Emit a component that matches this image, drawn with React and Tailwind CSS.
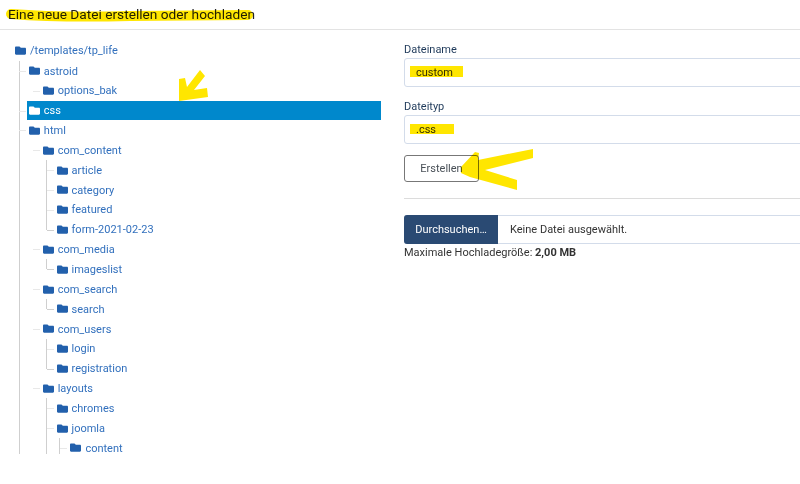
import React from 'react';
import { FaFolder } from 'react-icons/fa';

const tree = [
  { name: 'astroid', children: [{ name: 'options_bak' }] },
  { name: 'css', active: true },
  {
    name: 'html',
    children: [
      {
        name: 'com_content',
        lined: 'closed',
        children: [{ name: 'article' }, { name: 'category' }, { name: 'featured' }, { name: 'form-2021-02-23' }],
      },
      { name: 'com_media', lined: 'closed', children: [{ name: 'imageslist' }] },
      { name: 'com_search', lined: 'closed', children: [{ name: 'search' }] },
      { name: 'com_users', lined: 'closed', children: [{ name: 'login' }, { name: 'registration' }] },
      {
        name: 'layouts',
        lined: 'open',
        children: [{ name: 'chromes' }, { name: 'joomla', lined: 'open', children: [{ name: 'content' }] }],
      },
    ],
  },
];

const Row = ({ item }) => (
  <div
    className={`flex h-[19.85px] items-center gap-[4px] pl-[2px] ${
      item.active ? 'bg-[#0088cc] text-white' : 'text-[#3270bd]'
    }`}
  >
    <FaFolder size={11} className={item.active ? 'text-white' : 'text-[#2260ac]'} />
    <span className="pt-[2px]">{item.name}</span>
  </div>
);

const Node = ({ item, lined, last, root }) => {
  const closing = lined === 'closed' && last;
  return (
    <li className="relative">
      {lined && (
        <span
          className={`absolute top-0 w-px bg-[#cfcfcf] ${root ? 'left-[-8px]' : 'left-[-9px]'} ${
            closing ? 'h-[10px]' : 'h-full'
          }`}
        />
      )}
      <span className={`absolute left-[-8px] top-[10px] h-px w-[7px] ${closing ? 'bg-[#cfcfcf]' : 'bg-[#e8e8e8]'}`} />
      <Row item={item} />
      {item.children && <Branch items={item.children} lined={item.lined} />}
    </li>
  );
};

const Branch = ({ items, lined, root }) => (
  <ul className="ml-[13.85px]">
    {items.map((item, i) => (
      <Node key={item.name} item={item} lined={lined} root={root} last={i === items.length - 1} />
    ))}
  </ul>
);

const App = () => {
  return (
    <div className="relative h-[484px] w-[800px] overflow-hidden bg-white font-['Roboto',sans-serif] text-[11px]">
      <div className="h-[30px] border-b border-[#e3e3e3] pl-[8px] pt-[5px] text-[13.7px] leading-[18px] text-[#222]">
        Eine neue Datei erstellen oder hochladen
      </div>

      <div className="flex gap-[23px]">
        <div className="h-[424px] w-[381px] shrink-0 overflow-hidden pl-[13px] pt-[11px]">
          <div className="flex h-[19.9px] items-center gap-[4px] pl-[2px] text-[#3270bd]">
            <FaFolder size={11} className="text-[#2260ac]" />
            <span className="pt-[1px]">/templates/tp_life</span>
          </div>
          <Branch items={tree} lined="open" root />
        </div>

        <div className="w-[420px] shrink-0 pt-[12px] text-[#1f3a5a]">
          <label className="block h-[16px] leading-[16px]">Dateiname</label>
          <div className="flex h-[29px] items-center rounded-[3px] border border-[#d3dcea] pl-[11px] pt-[2px] text-[#333]">
            custom
          </div>
          <label className="mt-[12px] block h-[16px] leading-[16px]">Dateityp</label>
          <div className="flex h-[29px] items-center rounded-[3px] border border-[#d3dcea] pl-[11px] pt-[2px] text-[#333]">
            .css
          </div>
          <button className="mt-[11px] block h-[27px] w-[75px] rounded-[3px] border border-[#777] pt-[2px] text-[#495057]">
            Erstellen
          </button>
          <div className="mt-[16px] h-px bg-[#dcdcdc]" />
          <div className="mt-[16px] flex h-[29px] items-center rounded-[3px] border border-l-0 border-[#d3dcea]">
            <div className="flex h-[29px] w-[94px] items-center justify-center rounded-l-[3px] bg-[#2a4a73] pt-[2px] text-white">
              Durchsuchen…
            </div>
            <span className="pl-[12px] pt-[2px] text-[#333]">Keine Datei ausgewählt.</span>
          </div>
          <p className="pt-[1px] leading-[16px] text-[#333]">
            Maximale Hochladegröße: <strong>2,00 MB</strong>
          </p>
        </div>
      </div>

      {/* yellow marker scribbles */}
      <svg
        className="pointer-events-none absolute left-0 top-0 mix-blend-multiply"
        width="800"
        height="484"
        fill="none"
        stroke="#ffe600"
      >
        <path d="M11 14 C50 17 90 17 130 16 C170 16 210 15 248 15" strokeWidth="10" strokeLinecap="round" />
        <path d="M410 71.5 L463 71.5" strokeWidth="11" />
        <path d="M410 129 L454 129" strokeWidth="10" />
        <polygon
          fill="#ffe600"
          stroke="none"
          points="200,70 205,76 194,90 207,88 208,97 179,101 179,79 185,78 187,87"
        />
        <polygon
          fill="#ffe600"
          stroke="none"
          points="533,149 533,158 485,170 517,180 517,190 470,177 461,173 461,167 475,152 479,153 478,160"
        />
      </svg>
    </div>
  );
};

export default App;
